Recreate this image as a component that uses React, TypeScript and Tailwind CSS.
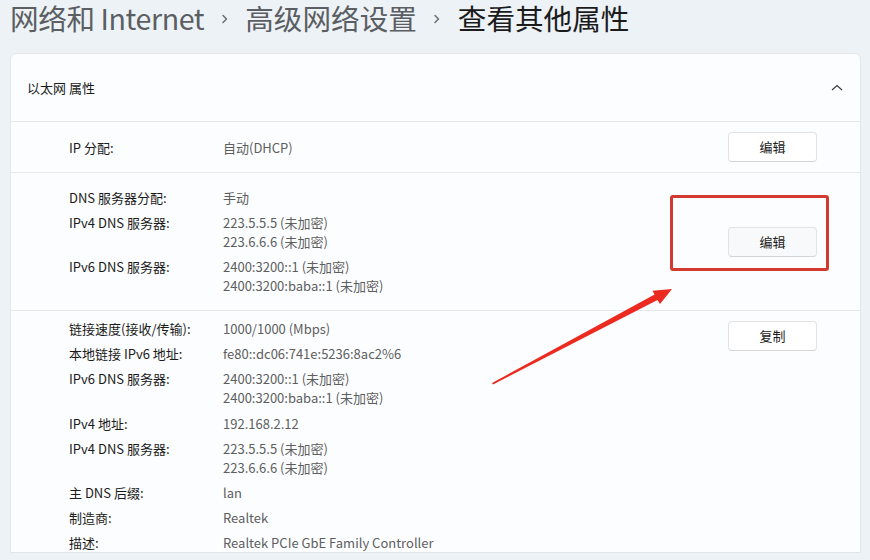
import React from "react";

const FONT = { fontFamily: '"Noto Sans CJK SC", "Noto Sans", sans-serif' };

function Chevron() {
  return (
    <svg width="14" height="14" viewBox="0 0 14 14" className="mx-[13.5px] mt-[2px] shrink-0">
      <path d="M5 3.5 L8.5 7 L5 10.5" fill="none" stroke="#6b6e72" strokeWidth="1.5" strokeLinecap="round" strokeLinejoin="round" />
    </svg>
  );
}

function Field({ label, values }: { label: string; values: string[] }) {
  return (
    <div className="flex leading-[19px]">
      <div className="w-[154px] shrink-0 text-[#1b1b1b]">{label}</div>
      <div className="text-[#5e5e5e]">
        {values.map((v) => (
          <div key={v}>{v}</div>
        ))}
      </div>
    </div>
  );
}

function Btn({ children, hover }: { children: React.ReactNode; hover?: boolean }) {
  return (
    <button
      className={`h-[30px] w-[89px] shrink-0 rounded-[4px] border border-[#e1e3e5] border-b-[#d2d4d6] text-[13px] text-[#1b1b1b] ${
        hover ? "bg-[#f8f9fa]" : "bg-white"
      }`}
    >
      {children}
    </button>
  );
}

export default function App() {
  return (
    <div className="relative h-[560px] w-[870px] overflow-hidden bg-[#edf2f7]" style={FONT}>
      {/* Breadcrumb title */}
      <h1 className="flex h-[36px] items-center pl-[10px] text-[28.6px] leading-[36px]">
        <span className="tracking-[-0.4px] text-[#5b5e62]">网络和 Internet</span>
        <Chevron />
        <span className="text-[#5b5e62]">高级网络设置</span>
        <Chevron />
        <span className="text-[#1b1b1b]">查看其他属性</span>
      </h1>

      {/* Card */}
      <div className="ml-[10px] mt-[17px] w-[851px] rounded-t-[6px] border border-[#e3e7eb] bg-[#fbfdfe] text-[13px]">
        <div className="flex h-[67px] items-center justify-between pl-[16px] pr-[16px]">
          <span className="text-[#1b1b1b]">以太网 属性</span>
          <svg width="14" height="14" viewBox="0 0 14 14">
            <path d="M2 9 L7 4.5 L12 9" fill="none" stroke="#3b3b3b" strokeWidth="1.1" />
          </svg>
        </div>

        <div className="flex h-[51px] items-center justify-between border-t border-[#e6e9ec] pl-[58px] pr-[43px]">
          <Field label="IP 分配:" values={["自动(DHCP)"]} />
          <Btn>编辑</Btn>
        </div>

        <div className="flex h-[138px] items-center justify-between border-t border-[#e6e9ec] pl-[58px] pr-[43px]">
          <div className="flex flex-col gap-[6px]">
            <Field label="DNS 服务器分配:" values={["手动"]} />
            <Field label="IPv4 DNS 服务器:" values={["223.5.5.5 (未加密)", "223.6.6.6 (未加密)"]} />
            <Field label="IPv6 DNS 服务器:" values={["2400:3200::1 (未加密)", "2400:3200:baba::1 (未加密)"]} />
          </div>
          <Btn hover>编辑</Btn>
        </div>

        <div className="flex items-start justify-between border-t border-[#e6e9ec] pl-[58px] pr-[43px] pt-[8px]">
          <div className="flex flex-col gap-[6.2px]">
            <Field label="链接速度(接收/传输):" values={["1000/1000 (Mbps)"]} />
            <Field label="本地链接 IPv6 地址:" values={["fe80::dc06:741e:5236:8ac2%6"]} />
            <Field label="IPv6 DNS 服务器:" values={["2400:3200::1 (未加密)", "2400:3200:baba::1 (未加密)"]} />
            <Field label="IPv4 地址:" values={["192.168.2.12"]} />
            <Field label="IPv4 DNS 服务器:" values={["223.5.5.5 (未加密)", "223.6.6.6 (未加密)"]} />
            <Field label="主 DNS 后缀:" values={["lan"]} />
            <Field label="制造商:" values={["Realtek"]} />
            <Field label="描述:" values={["Realtek PCIe GbE Family Controller"]} />
          </div>
          <div className="pt-[2px]">
            <Btn>复制</Btn>
          </div>
        </div>
      </div>

      {/* Annotation: red box */}
      <div className="pointer-events-none absolute left-[670px] top-[195px] h-[76px] w-[159px] rounded-[3px] border-[3px] border-[#d23a2f]" />

      {/* Annotation: red arrow */}
      <svg className="pointer-events-none absolute left-0 top-0" width="870" height="560" viewBox="0 0 870 560">
        <polygon
          points="492,383 654.6,294.6 652.5,290.8 672,289 660,304 657.5,300 493,384.5"
          fill="#ec2a1f"
        />
      </svg>
    </div>
  );
}
